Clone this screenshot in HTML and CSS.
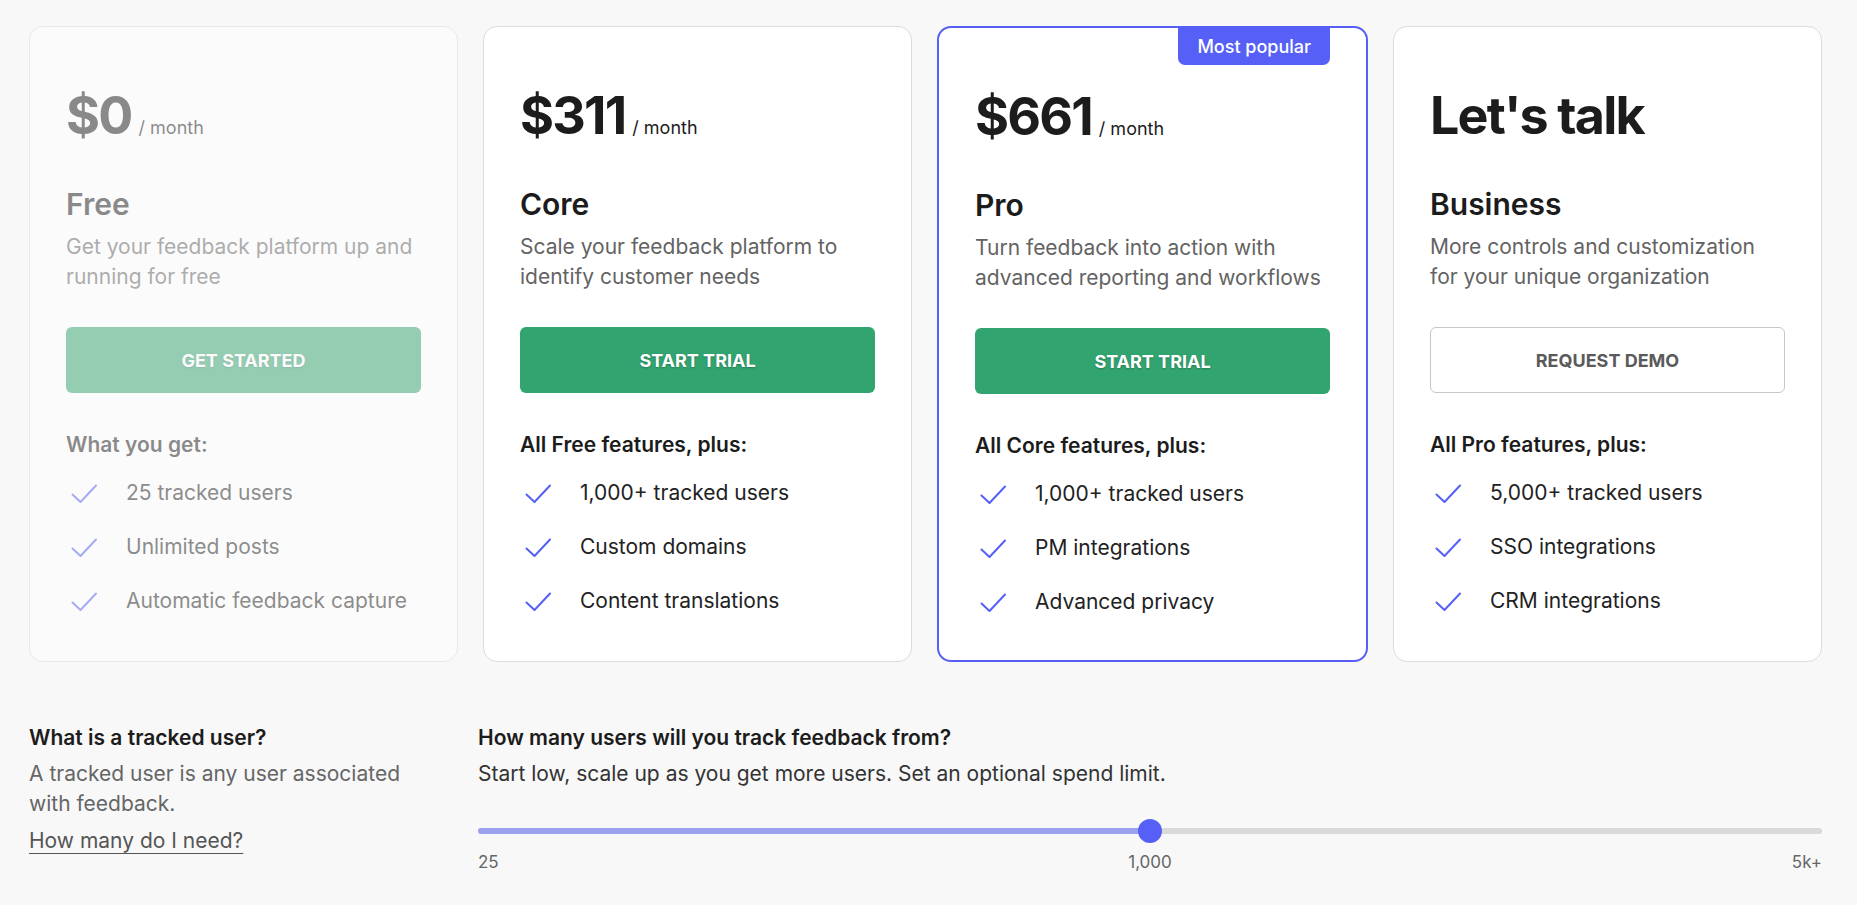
FILE: index.html
```html
<!DOCTYPE html>
<html lang="en">
<head>
<meta charset="utf-8">
<title>Pricing</title>
<link rel="stylesheet" href="styles.css">
</head>
<body>
<main class="page">
  <section class="plans">
    <article class="card card-muted">
      <div class="price"><span class="amount">$0</span><span class="period">/ month</span></div>
      <h2 class="name">Free</h2>
      <p class="desc">Get your feedback platform up and running for free</p>
      <a class="btn btn-green">Get started</a>
      <h3 class="feat-head">What you get:</h3>
      <ul class="features">
        <li><svg class="check" viewBox="0 0 26 19"><path d="M1.5 10.5 L9.5 18 L25 1.5"/></svg><span>25 tracked users</span></li>
        <li><svg class="check" viewBox="0 0 26 19"><path d="M1.5 10.5 L9.5 18 L25 1.5"/></svg><span>Unlimited posts</span></li>
        <li><svg class="check" viewBox="0 0 26 19"><path d="M1.5 10.5 L9.5 18 L25 1.5"/></svg><span>Automatic feedback capture</span></li>
      </ul>
    </article>

    <article class="card">
      <div class="price"><span class="amount">$311</span><span class="period">/ month</span></div>
      <h2 class="name">Core</h2>
      <p class="desc">Scale your feedback platform to identify customer needs</p>
      <a class="btn btn-green">Start trial</a>
      <h3 class="feat-head">All Free features, plus:</h3>
      <ul class="features">
        <li><svg class="check" viewBox="0 0 26 19"><path d="M1.5 10.5 L9.5 18 L25 1.5"/></svg><span>1,000+ tracked users</span></li>
        <li><svg class="check" viewBox="0 0 26 19"><path d="M1.5 10.5 L9.5 18 L25 1.5"/></svg><span>Custom domains</span></li>
        <li><svg class="check" viewBox="0 0 26 19"><path d="M1.5 10.5 L9.5 18 L25 1.5"/></svg><span>Content translations</span></li>
      </ul>
    </article>

    <article class="card card-popular">
      <span class="badge">Most popular</span>
      <div class="price"><span class="amount">$661</span><span class="period">/ month</span></div>
      <h2 class="name">Pro</h2>
      <p class="desc">Turn feedback into action with advanced reporting and workflows</p>
      <a class="btn btn-green">Start trial</a>
      <h3 class="feat-head">All Core features, plus:</h3>
      <ul class="features">
        <li><svg class="check" viewBox="0 0 26 19"><path d="M1.5 10.5 L9.5 18 L25 1.5"/></svg><span>1,000+ tracked users</span></li>
        <li><svg class="check" viewBox="0 0 26 19"><path d="M1.5 10.5 L9.5 18 L25 1.5"/></svg><span>PM integrations</span></li>
        <li><svg class="check" viewBox="0 0 26 19"><path d="M1.5 10.5 L9.5 18 L25 1.5"/></svg><span>Advanced privacy</span></li>
      </ul>
    </article>

    <article class="card">
      <div class="price"><span class="amount">Let's talk</span></div>
      <h2 class="name">Business</h2>
      <p class="desc">More controls and customization for your unique organization</p>
      <a class="btn btn-outline">Request demo</a>
      <h3 class="feat-head">All Pro features, plus:</h3>
      <ul class="features">
        <li><svg class="check" viewBox="0 0 26 19"><path d="M1.5 10.5 L9.5 18 L25 1.5"/></svg><span>5,000+ tracked users</span></li>
        <li><svg class="check" viewBox="0 0 26 19"><path d="M1.5 10.5 L9.5 18 L25 1.5"/></svg><span>SSO integrations</span></li>
        <li><svg class="check" viewBox="0 0 26 19"><path d="M1.5 10.5 L9.5 18 L25 1.5"/></svg><span>CRM integrations</span></li>
      </ul>
    </article>
  </section>

  <section class="info">
    <div class="info-left">
      <h3 class="info-head">What is a tracked user?</h3>
      <p class="info-text">A tracked user is any user associated with feedback.</p>
      <a class="info-link">How many do I need?</a>
    </div>
    <div class="info-right">
      <h3 class="info-head">How many users will you track feedback from?</h3>
      <p class="info-sub">Start low, scale up as you get more users. Set an optional spend limit.</p>
      <div class="slider">
        <div class="track"><div class="fill" style="width:50%"></div></div>
        <span class="thumb" style="left:50%"></span>
      </div>
      <div class="ticks">
        <span class="tick-start">25</span>
        <span class="tick-mid">1,000</span>
        <span class="tick-end">5k+</span>
      </div>
    </div>
  </section>
</main>
</body>
</html>
```

FILE: styles.css
```css
* { box-sizing: border-box; }

body {
  margin: 0;
  background: #f8f8f8;
  font-family: Inter, "Noto Sans", "Liberation Sans", sans-serif;
  color: #1c1c1c;
}

h2, h3, p, ul { margin: 0; padding: 0; }

.page {
  padding: 26px 35px 0 29px;
}

.plans {
  display: flex;
  gap: 25px;
}

.card {
  position: relative;
  flex: 1 1 0;
  min-width: 0;
  background: #fff;
  border: 1px solid #dcdcdc;
  border-radius: 14px;
  padding: 63px 36px 44px;
  display: flex;
  flex-direction: column;
}

.card-muted { opacity: 0.5; }

.card-popular {
  border: 2px solid #5660f6;
  padding: 63px 36px 43px;
}

.badge {
  position: absolute;
  top: 0;
  right: 36px;
  height: 37px;
  padding: 0 19px;
  background: #5660f6;
  color: #fff;
  font-size: 18px;
  font-weight: 500;
  line-height: 37px;
  border-radius: 0 0 7px 7px;
}

.price {
  display: flex;
  align-items: baseline;
  gap: 7px;
}

.amount {
  font-size: 52px;
  line-height: 52px;
  font-weight: 700;
  letter-spacing: -1.8px;
  color: #1c1c1c;
}

.period {
  font-size: 18px;
  color: #1c1c1c;
}

.name {
  margin-top: 44px;
  font-size: 30px;
  line-height: 36px;
  font-weight: 600;
}

.desc {
  margin-top: 10px;
  font-size: 21px;
  line-height: 30px;
  color: #636363;
}

.btn {
  margin-top: 35px;
  height: 66px;
  border-radius: 6px;
  display: flex;
  align-items: center;
  justify-content: center;
  font-size: 18px;
  font-weight: 700;
  text-transform: uppercase;
  text-decoration: none;
}

.btn-green {
  background: #32a46f;
  color: #fff;
  text-shadow: 0 1px 2px rgba(0, 0, 0, 0.25);
}

.btn-outline {
  background: #fff;
  border: 1px solid #c6c6c6;
  color: #5a5a5a;
}

.feat-head {
  margin-top: 37px;
  font-size: 21px;
  line-height: 30px;
  font-weight: 600;
}

.features {
  list-style: none;
  margin-top: 18px;
  display: flex;
  flex-direction: column;
  gap: 24px;
}

.features li {
  display: flex;
  align-items: center;
  font-size: 21px;
  line-height: 30px;
  color: #222;
}

.check {
  width: 26px;
  height: 19px;
  margin-left: 5px;
  margin-right: 29px;
  flex: none;
  fill: none;
  stroke: #5660f6;
  stroke-width: 2;
  stroke-linecap: round;
  stroke-linejoin: round;
}

.info {
  margin-top: 61px;
  display: grid;
  grid-template-columns: 400px 1fr;
  column-gap: 49px;
}

.info-head {
  font-size: 21px;
  line-height: 30px;
  font-weight: 600;
  color: #1c1c1c;
}

.info-text {
  margin-top: 6px;
  font-size: 21px;
  line-height: 30px;
  color: #666;
}

.info-link {
  display: inline-block;
  margin-top: 7px;
  font-size: 21px;
  line-height: 30px;
  color: #555;
  text-decoration: underline;
  text-underline-offset: 5px;
  text-decoration-thickness: 1px;
}

.info-sub {
  margin-top: 6px;
  font-size: 21px;
  line-height: 30px;
  color: #333;
}

.slider {
  position: relative;
  margin-top: 30px;
  padding: 9px 0;
}

.track {
  height: 6px;
  border-radius: 3px;
  background: #d9d9d9;
  overflow: hidden;
}

.fill {
  height: 100%;
  background: #9ba0ef;
}

.thumb {
  position: absolute;
  top: 50%;
  width: 24px;
  height: 24px;
  border-radius: 50%;
  background: #5660f6;
  transform: translate(-50%, -50%);
}

.ticks {
  margin-top: 7px;
  display: grid;
  grid-template-columns: 1fr auto 1fr;
  font-size: 17px;
  line-height: 24px;
  color: #666;
}

.tick-start { justify-self: start; }
.tick-end { justify-self: end; }
```
